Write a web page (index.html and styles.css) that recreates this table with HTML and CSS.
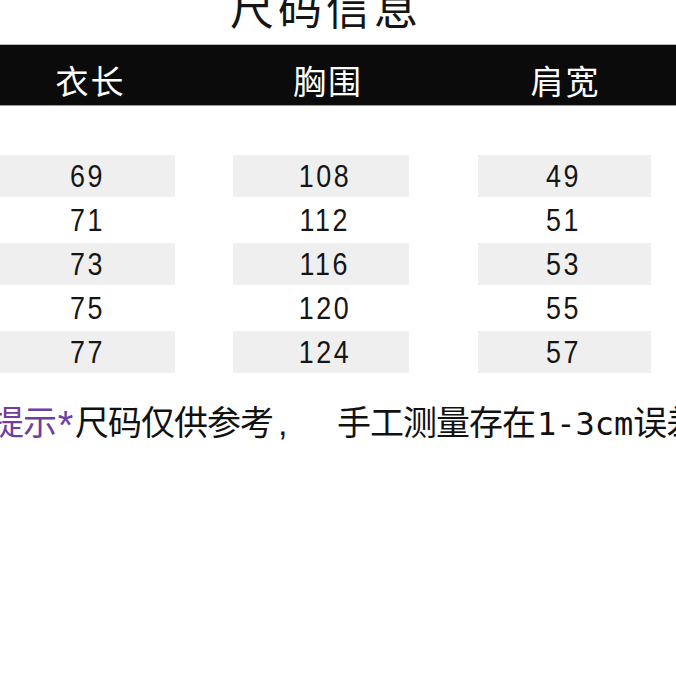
FILE: index.html
```html
<!DOCTYPE html>
<html lang="zh">
<head>
<meta charset="utf-8">
<title>尺码信息</title>
<link rel="stylesheet" href="styles.css">
</head>
<body>
<div class="page">
  <div class="title">尺码信息</div>
  <div class="head-bar">
    <div class="grid">
      <div class="head">衣长</div>
      <div class="head">胸围</div>
      <div class="head">肩宽</div>
    </div>
  </div>
  <div class="rows">
    <div class="grid row shade"><div class="cell"><span class="num">69</span></div><div class="cell"><span class="num">108</span></div><div class="cell"><span class="num">49</span></div></div>
    <div class="grid row"><div class="cell"><span class="num">71</span></div><div class="cell"><span class="num">112</span></div><div class="cell"><span class="num">51</span></div></div>
    <div class="grid row shade"><div class="cell"><span class="num">73</span></div><div class="cell"><span class="num">116</span></div><div class="cell"><span class="num">53</span></div></div>
    <div class="grid row"><div class="cell"><span class="num">75</span></div><div class="cell"><span class="num">120</span></div><div class="cell"><span class="num">55</span></div></div>
    <div class="grid row shade"><div class="cell"><span class="num">77</span></div><div class="cell"><span class="num">124</span></div><div class="cell"><span class="num">57</span></div></div>
  </div>
  <div class="note"><span class="hint">提示<span class="star">*</span></span>尺码仅供参考<span class="comma">,</span>手工测量存在<span class="mono">1-3cm</span>误差</div>
</div>
</body>
</html>
```
FILE: styles.css
```css
html, body {
  margin: 0;
  padding: 0;
  background: #ffffff;
}
.page {
  width: 676px;
  height: 676px;
  overflow: hidden;
  background: #ffffff;
  font-family: "Noto Sans CJK SC", "Liberation Sans", sans-serif;
}
.title {
  height: 44px;
  line-height: 12px;
  font-size: 44px;
  text-align: center;
  color: #151515;
  letter-spacing: 4px;
  padding-right: 24px;
}
.head-bar {
  height: 62px;
  background: #0b0b0b;
  border-top: 1px solid #b8b8b8;
  border-bottom: 1px solid #9a9a9a;
  box-sizing: border-box;
}
.grid {
  display: flex;
  margin-left: -2px;
}
.grid > :nth-child(1) {
  width: 177px;
}
.grid > :nth-child(2) {
  width: 176px;
  margin-left: 58px;
  padding-left: 6px;
  box-sizing: border-box;
}
.grid > :nth-child(3) {
  width: 173px;
  margin-left: 69px;
  padding-right: 4px;
  box-sizing: border-box;
}
.head {
  color: #ffffff;
  font-size: 33px;
  letter-spacing: 2px;
  text-align: center;
  line-height: 62px;
  padding-top: 4px;
  padding-left: 4px;
}
.grid > .head:nth-child(3) {
  padding-left: 0;
  padding-right: 6px;
}
.rows {
  padding-top: 49px;
}
.row {
  height: 44px;
  box-sizing: border-box;
  padding-bottom: 2px;
}
.cell {
  color: #151515;
  text-align: center;
  line-height: 42px;
  height: 42px;
}
.num {
  display: inline-block;
  font-family: "Liberation Sans", Arial, sans-serif;
  font-size: 32px;
  letter-spacing: 3px;
  padding-left: 3px;
  transform: scaleX(0.84);
}
.shade .cell {
  background: #efefef;
}
.note {
  margin-top: 24px;
  margin-left: -10px;
  height: 44px;
  line-height: 44px;
  font-size: 34px;
  font-weight: 400;
  letter-spacing: -1px;
  white-space: nowrap;
  color: #111111;
}
.hint {
  color: #6e3fa3;
}
.star {
  display: inline-block;
  width: 19px;
  font-family: "Liberation Sans", Arial, sans-serif;
  font-size: 40px;
  letter-spacing: 0;
  text-align: center;
  vertical-align: top;
  line-height: 52px;
}
.comma {
  display: inline-block;
  width: 64px;
  padding-left: 5px;
  box-sizing: border-box;
  font-family: "Liberation Sans", Arial, sans-serif;
  letter-spacing: 0;
}
.mono {
  font-family: "DejaVu Sans Mono", "Liberation Mono", monospace;
  font-size: 32px;
  letter-spacing: 0;
  padding-left: 2px;
}
```
